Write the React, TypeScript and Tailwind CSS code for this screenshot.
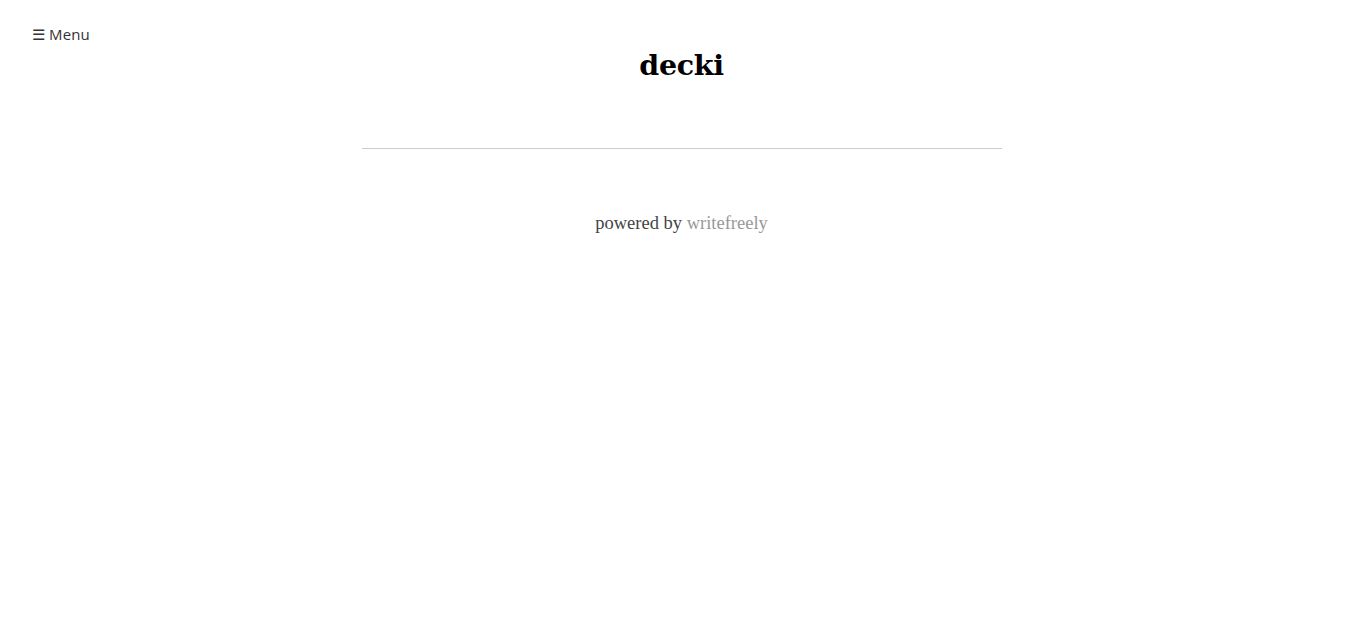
export default function App() {
  return (
    <div className="min-h-screen w-full bg-white">
      {/* Menu toggle */}
      <nav className="absolute left-8 top-[22px]">
        <a className="text-[15px] leading-5 text-[#333] font-['Open_Sans',sans-serif] tracking-[0.1px]">
          ☰ Menu
        </a>
      </nav>

      <header className="pt-[45px] text-center">
        <h1 className="text-[28.5px] leading-10 font-bold text-black font-['DejaVu_Serif','Liberation_Serif',serif] tracking-[-0.3px]">
          decki
        </h1>
      </header>

      <div className="mx-auto mt-[63px] w-[640px] border-t border-[#ccc]" />

      <footer className="mt-[62px] text-center">
        <p className="text-[18.5px] leading-6 text-[#444] font-['Liberation_Serif',serif]">
          powered by <a className="text-[#999]">writefreely</a>
        </p>
      </footer>
    </div>
  );
}
